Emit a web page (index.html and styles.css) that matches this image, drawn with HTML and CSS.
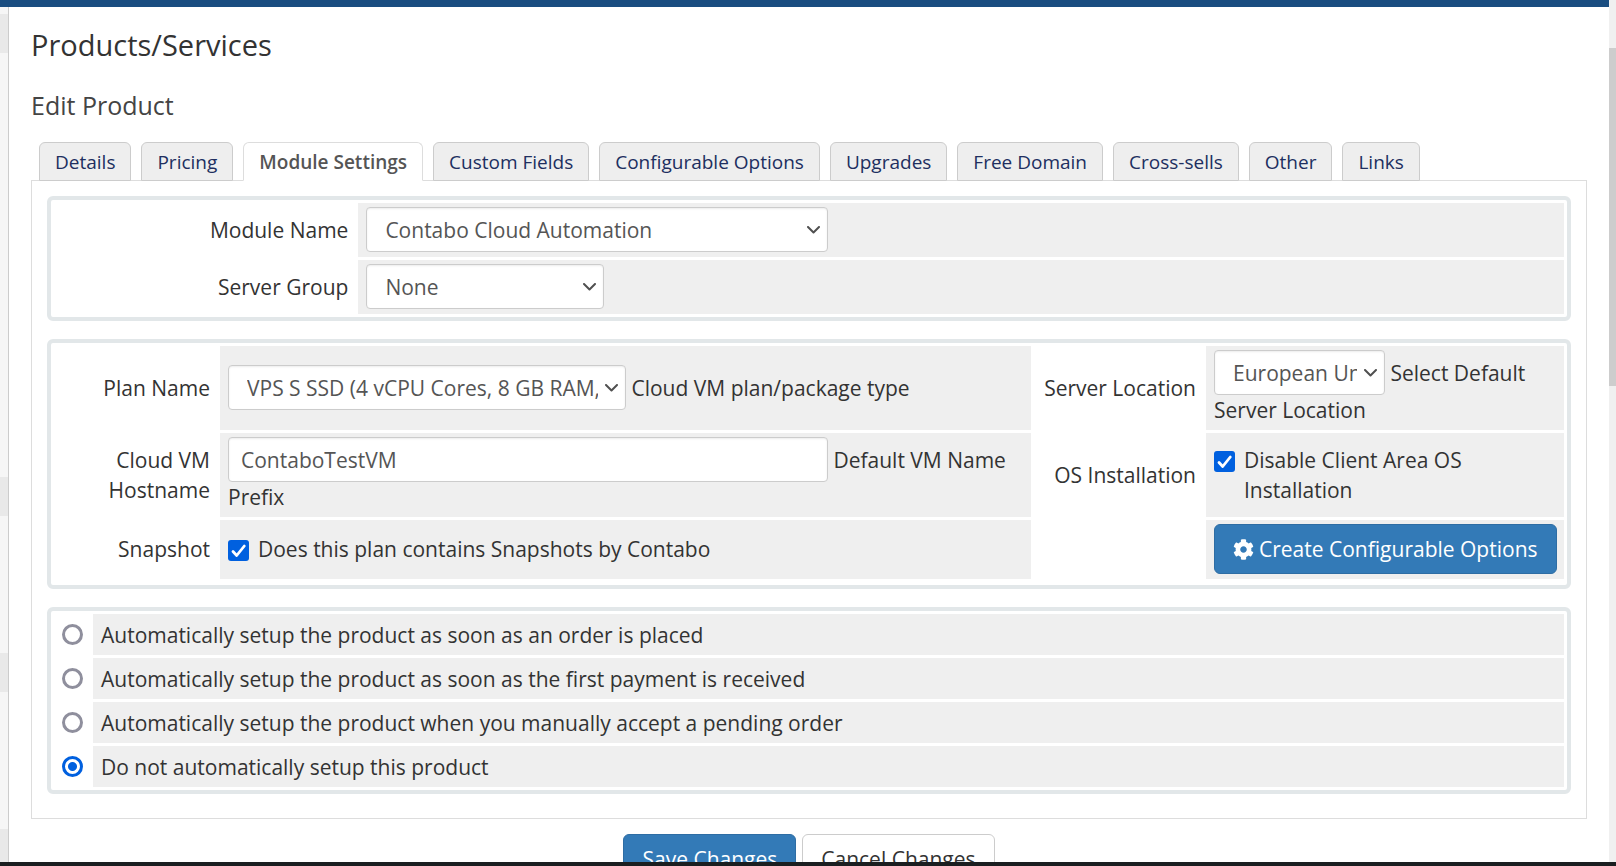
FILE: index.html
```html
<!DOCTYPE html>
<html lang="en">
<head>
<meta charset="utf-8">
<title>Products/Services</title>
<link rel="stylesheet" href="styles.css">
</head>
<body>
<div class="window">
  <div class="page">
    <header class="topbar"></header>
    <div class="columns">
      <aside class="sidebar">
        <div class="side-head"></div>
        <div class="side-head side-head-far"></div>
        <div class="side-head side-head-near"></div>
        <div class="side-head side-head-near"></div>
      </aside>
      <main class="content">
        <h1 class="title">Products/Services</h1>
        <h2 class="subtitle">Edit Product</h2>
        <nav class="tabs">
          <a class="tab" href="#details">Details</a>
          <a class="tab" href="#pricing">Pricing</a>
          <a class="tab tab-active" href="#module">Module Settings</a>
          <a class="tab" href="#fields">Custom Fields</a>
          <a class="tab" href="#config">Configurable Options</a>
          <a class="tab" href="#upgrades">Upgrades</a>
          <a class="tab" href="#domain">Free Domain</a>
          <a class="tab" href="#cross">Cross-sells</a>
          <a class="tab" href="#other">Other</a>
          <a class="tab" href="#links">Links</a>
        </nav>
        <form class="form">
          <div class="panel">
            <table class="grid">
              <tr>
                <td class="label label-wide"><label for="module">Module Name</label></td>
                <td class="field"><select class="control select select-module" id="module"><option>Contabo Cloud Automation</option></select></td>
              </tr>
              <tr>
                <td class="label"><label for="group">Server Group</label></td>
                <td class="field"><select class="control select select-group" id="group"><option>None</option></select></td>
              </tr>
            </table>

            <table class="grid grid-options">
              <tr>
                <td class="label label-first"><label for="plan">Plan Name</label></td>
                <td class="field"><select class="control select select-plan" id="plan"><option>VPS S SSD (4 vCPU Cores, 8 GB RAM, 200 GB SSD)</option></select> Cloud VM plan/package type</td>
                <td class="label label-second"><label for="location">Server Location</label></td>
                <td class="field field-last"><select class="control select select-location" id="location"><option>European Union (Germany)</option></select> Select Default Server Location</td>
              </tr>
              <tr>
                <td class="label"><label for="host">Cloud VM Hostname</label></td>
                <td class="field"><input class="control text" id="host" type="text" value="ContaboTestVM"> Default VM Name Prefix</td>
                <td class="label">OS Installation</td>
                <td class="field"><label class="check"><input class="checkbox" type="checkbox" checked><span>Disable Client Area OS Installation</span></label></td>
              </tr>
              <tr>
                <td class="label">Snapshot</td>
                <td class="field"><label class="check"><input class="checkbox" type="checkbox" checked><span>Does this plan contains Snapshots by Contabo</span></label></td>
                <td class="label"></td>
                <td class="field"><button class="button button-primary button-create" type="button"><svg class="gear" viewBox="0 0 512 512" aria-hidden="true"><path fill="currentColor" d="M487.4 315.7l-42.600-24.600c4.300-23.200 4.300-47 0-70.200l42.600-24.600c4.900-2.800 7.100-8.600 5.500-14-11.100-35.600-30-67.800-54.700-94.600-3.800-4.100-10-5.100-14.800-2.300L380.800 110c-17.900-15.400-38.500-27.300-60.800-35.100V25.800c0-5.600-3.900-10.500-9.400-11.700-36.700-8.200-74.300-7.800-109.200 0-5.500 1.200-9.400 6.100-9.400 11.700V75c-22.200 7.900-42.800 19.800-60.800 35.100L88.700 85.500c-4.900-2.800-11-1.900-14.800 2.300-24.700 26.700-43.600 58.900-54.700 94.600-1.700 5.400.6 11.200 5.500 14L67.300 221c-4.300 23.200-4.300 47 0 70.200l-42.600 24.600c-4.900 2.800-7.100 8.600-5.500 14 11.100 35.600 30 67.800 54.700 94.600 3.800 4.100 10 5.100 14.800 2.300l42.600-24.600c17.900 15.400 38.500 27.300 60.800 35.100v49.200c0 5.600 3.900 10.500 9.400 11.700 36.700 8.200 74.300 7.800 109.200 0 5.500-1.200 9.400-6.100 9.400-11.700v-49.200c22.200-7.900 42.800-19.800 60.800-35.100l42.600 24.600c4.900 2.800 11 1.900 14.800-2.300 24.700-26.700 43.600-58.900 54.700-94.600 1.500-5.500-.7-11.300-5.600-14.100zM256 336c-44.100 0-80-35.900-80-80s35.900-80 80-80 80 35.900 80 80-35.900 80-80 80z"/></svg>Create Configurable Options</button></td>
              </tr>
            </table>

            <table class="grid">
              <tr>
                <td class="pick"><input class="radio" type="radio" name="setup" id="setup-order"></td>
                <td class="field field-text"><label for="setup-order">Automatically setup the product as soon as an order is placed</label></td>
              </tr>
              <tr>
                <td class="pick"><input class="radio" type="radio" name="setup" id="setup-payment"></td>
                <td class="field field-text"><label for="setup-payment">Automatically setup the product as soon as the first payment is received</label></td>
              </tr>
              <tr>
                <td class="pick"><input class="radio" type="radio" name="setup" id="setup-accept"></td>
                <td class="field field-text"><label for="setup-accept">Automatically setup the product when you manually accept a pending order</label></td>
              </tr>
              <tr>
                <td class="pick"><input class="radio" type="radio" name="setup" id="setup-none" checked></td>
                <td class="field field-text"><label for="setup-none">Do not automatically setup this product</label></td>
              </tr>
            </table>
          </div>
          <div class="actions">
            <button class="button button-primary" type="button">Save Changes</button>
            <button class="button button-plain" type="button">Cancel Changes</button>
          </div>
        </form>
      </main>
    </div>
  </div>
  <div class="scrollbar"><div class="thumb"></div></div>
</div>
<footer class="taskbar"></footer>
</body>
</html>
```

FILE: styles.css
```css
* {
  box-sizing: border-box;
}

body {
  display: flex;
  flex-direction: column;
  height: 100vh;
  margin: 0;
  overflow: hidden;
  background: #fff;
  color: #333;
  font: 21px/30px "Open Sans", "Noto Sans", sans-serif;
}

.window {
  display: flex;
  flex: 1;
  min-height: 0;
}

.page {
  display: flex;
  flex: 1;
  flex-direction: column;
  min-width: 0;
}

.topbar {
  flex: none;
  height: 7px;
  background: #1a4d80;
}

.columns {
  display: flex;
  flex: 1;
  min-height: 0;
}

.sidebar {
  flex: none;
  width: 9px;
  padding-top: 7px;
  overflow: hidden;
  border-right: 1px solid #ccc;
  background: #f6f6f6;
}

.side-head {
  height: 39px;
  background: #e9e9e9;
}

.side-head-far {
  margin-top: 424px;
}

.side-head-near {
  margin-top: 137px;
}

.content {
  flex: 1;
  min-width: 0;
  padding: 16px 22px 0;
  overflow: hidden;
}

.title {
  margin: 0;
  font-size: 29px;
  font-weight: 400;
  line-height: 44px;
}

.subtitle {
  margin: 20px 0 19px;
  color: #444;
  font-size: 25px;
  font-weight: 400;
  line-height: 36px;
}

.tabs {
  display: flex;
  gap: 10px;
  padding: 0 8px;
}

.tab {
  height: 39px;
  padding: 0 15px;
  border: 1px solid #ccc;
  border-radius: 6px 6px 0 0;
  background: #eee;
  color: #202f60;
  font-size: 19px;
  line-height: 38px;
  text-decoration: none;
  white-space: nowrap;
}

.tab-active {
  border-color: #ddd;
  border-bottom-color: #fff;
  background: #fff;
  color: #555;
  font-weight: 600;
  z-index: 1;
}

.panel {
  display: flex;
  flex-direction: column;
  gap: 18px;
  margin-top: -1px;
  padding: 15px 15px 24px;
  border: 1px solid #ddd;
}

.grid {
  width: 100%;
  border: 4px solid #e2e7e9;
  border-radius: 6px;
  border-collapse: separate;
  border-spacing: 3px;
}

.grid-options {
  padding-bottom: 3px;
}

td {
  padding: 4px 7px 5px 8px;
}

.label {
  text-align: right;
}

.label-wide {
  width: 20%;
}

.label-first {
  width: 163px;
}

.label-second {
  width: 169px;
}

.field {
  background: #efefef;
}

.field-last {
  width: 358px;
}

.field-text {
  padding: 6px 8px 5px;
}

.pick {
  width: 36px;
  padding: 0;
}

.control {
  height: 45px;
  margin: 0;
  padding: 0 12px;
  border: 1px solid #ccc;
  border-radius: 4px;
  background-color: #fff;
  box-shadow: inset 0 1px 2px rgba(0, 0, 0, 0.08);
  color: #555;
  font: inherit;
  vertical-align: baseline;
}

.select {
  appearance: none;
  padding: 0 27px 0 18px;
  background-image: url("data:image/svg+xml,%3Csvg xmlns='http://www.w3.org/2000/svg' viewBox='0 0 13 8'%3E%3Cpath d='M1 1l5.500 5.500L12 1' fill='none' stroke='%23505050' stroke-width='2' stroke-linecap='round' stroke-linejoin='round'/%3E%3C/svg%3E");
  background-position: right 7px center;
  background-repeat: no-repeat;
  background-size: 13px 8px;
}

.select-module {
  width: 462px;
}

.select-group {
  width: 238px;
}

.select-plan {
  width: 398px;
}

.select-location {
  width: 171px;
}

.text {
  width: 600px;
}

.check {
  display: flex;
  gap: 9px;
}

.checkbox,
.radio {
  appearance: none;
  flex: none;
  width: 21px;
  height: 21px;
  margin: 6px 0 0;
}

.checkbox {
  border: 2px solid #8f8f9d;
  border-radius: 3px;
  background: #fff;
}

.checkbox:checked {
  border: 0;
  background: #0060df url("data:image/svg+xml,%3Csvg xmlns='http://www.w3.org/2000/svg' viewBox='0 0 21 21'%3E%3Cpath d='M5 11.500l3.700 4L16.300 6' fill='none' stroke='white' stroke-width='2.800' stroke-linecap='round' stroke-linejoin='round'/%3E%3C/svg%3E") center / 21px 21px no-repeat;
}

.radio {
  display: block;
  margin: 0 auto;
  border: 3px solid #8f8f9d;
  border-radius: 50%;
  background: #fff;
}

.radio:checked {
  border-color: #0060df;
  background: radial-gradient(circle, #0060df 4px, #fff 5px);
}

.button {
  display: inline-flex;
  align-items: center;
  justify-content: center;
  height: 50px;
  padding: 0 18px;
  border: 1px solid #ccc;
  border-radius: 6px;
  background: #fff;
  color: #333;
  font: inherit;
  white-space: nowrap;
}

.button-primary {
  border-color: #2e6da4;
  background: #337ab7;
  color: #fff;
}

.button-create {
  gap: 5px;
  vertical-align: middle;
}

.gear {
  width: 21px;
  height: 21px;
}

.actions {
  display: flex;
  gap: 6px;
  justify-content: center;
  padding-top: 15px;
}

.scrollbar {
  flex: none;
  width: 7px;
  padding-top: 48px;
  background: #f0f0f0;
}

.thumb {
  height: 338px;
  background: #cdcdcd;
}

.taskbar {
  flex: none;
  height: 4px;
  background: #1a1e20;
}
```
